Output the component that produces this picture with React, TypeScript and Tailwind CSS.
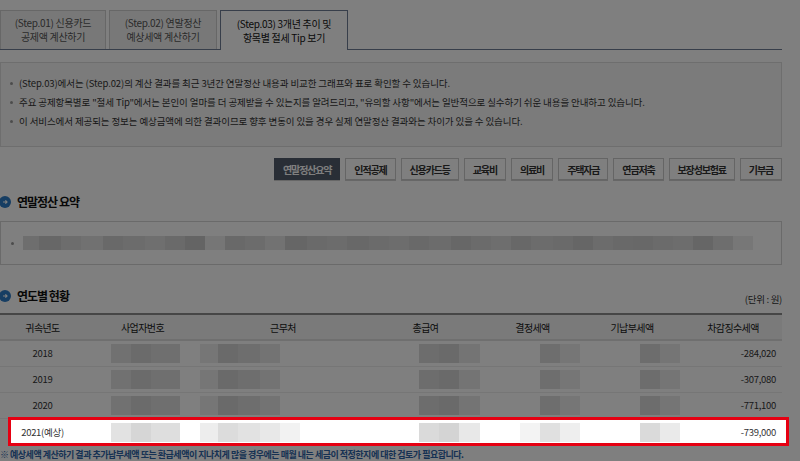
const font = "font-['Noto_Sans_CJK_KR','Noto_Sans',sans-serif]";

const tabs = [
  { lines: ["(Step.01) 신용카드", "공제액 계산하기"], w: "w-[106px]" },
  { lines: ["(Step.02) 연말정산", "예상세액 계산하기"], w: "w-[108px]" },
];

const buttons = ["연말정산요약", "인적공제", "신용카드등", "교육비", "의료비", "주택자금", "연금저축", "보장성보험료", "기부금"];

const notes = [
  "(Step.03)에서는 (Step.02)의 계산 결과를 최근 3년간 연말정산 내용과 비교한 그래프와 표로 확인할 수 있습니다.",
  "주요 공제항목별로 \"절세 Tip\"에서는 본인이 얼마를 더 공제받을 수 있는지를 알려드리고, \"유의할 사항\"에서는 일반적으로 실수하기 쉬운 내용을 안내하고 있습니다.",
  "이 서비스에서 제공되는 정보는 예상금액에 의한 결과이므로 향후 변동이 있을 경우 실제 연말정산 결과와는 차이가 있을 수 있습니다.",
];

const heads = ["귀속년도", "사업자번호", "근무처", "총급여", "결정세액", "기납부세액", "차감징수세액"];

const rows = [
  { year: "2018", amount: "-284,020" },
  { year: "2019", amount: "-307,080" },
  { year: "2020", amount: "-771,100" },
];

// blurred (pixelated) strip: [width, colour class]
type Seg = [number, string];

const summarySegs: Seg[] = [
  [16, "bg-[#dcdcdc]"], [22, "bg-[#cfcfcf]"], [20, "bg-[#dadada]"], [22, "bg-[#e2e2e2]"], [20, "bg-[#d2d2d2]"],
  [22, "bg-[#d8d8d8]"], [20, "bg-[#dfdfdf]"], [20, "bg-[#d4d4d4]"], [20, "bg-[#c9c9c9]"], [20, "bg-[#ececec]"],
  [20, "bg-[#d3d3d3]"], [20, "bg-[#d8d8d8]"], [20, "bg-[#e4e4e4]"], [22, "bg-[#cccccc]"], [20, "bg-[#d4d4d4]"],
  [20, "bg-[#d8d8d8]"], [22, "bg-[#d0d0d0]"], [20, "bg-[#d6d6d6]"], [20, "bg-[#dadada]"], [20, "bg-[#d2d2d2]"],
  [22, "bg-[#d8d8d8]"], [20, "bg-[#cfcfcf]"], [20, "bg-[#d6d6d6]"], [20, "bg-[#dcdcdc]"], [20, "bg-[#d1d1d1]"],
  [22, "bg-[#d8d8d8]"], [20, "bg-[#d4d4d4]"], [20, "bg-[#cdcdcd]"], [20, "bg-[#d9d9d9]"], [20, "bg-[#d3d3d3]"],
  [20, "bg-[#d0d0d0]"], [20, "bg-[#d7d7d7]"], [20, "bg-[#dadada]"], [20, "bg-[#cdcdcd]"], [20, "bg-[#dddddd]"],
  [20, "bg-[#eeeeee]"],
];

function Strip({ segs, className }: { segs: Seg[]; className?: string }) {
  return (
    <div className={"flex " + (className ?? "")}>
      {segs.map(([w, c], i) => (
        <div key={i} className={"h-full shrink-0 " + c} style={{ width: w }} />
      ))}
    </div>
  );
}

const blurA: Seg[] = [[20, "bg-[#e2e2e2]"], [20, "bg-[#d6d6d6]"], [29, "bg-[#dedede]"]];
const blurB: Seg[] = [[18, "bg-[#ececec]"], [20, "bg-[#d4d4d4]"], [22, "bg-[#dcdcdc]"], [20, "bg-[#e6e6e6]"]];
const blurB2: Seg[] = [[18, "bg-[#ededed]"], [20, "bg-[#dcdcdc]"], [22, "bg-[#e2e2e2]"], [20, "bg-[#e8e8e8]"], [20, "bg-[#f2f2f2]"]];
const blurC: Seg[] = [[20, "bg-[#dadada]"], [20, "bg-[#d4d4d4]"], [21, "bg-[#e8e8e8]"]];
const blurD: Seg[] = [[20, "bg-[#dcdcdc]"], [20, "bg-[#ececec]"]];
const blurD2: Seg[] = [[20, "bg-[#f3f3f3]"], [20, "bg-[#e0e0e0]"], [20, "bg-[#eeeeee]"]];
const blurE: Seg[] = [[20, "bg-[#dadada]"], [20, "bg-[#eaeaea]"]];

const grid = "grid grid-cols-[85px_115px_166px_119px_95px_104px_98px]";

function Row({ year, amount, last }: { year: string; amount: string; last?: boolean }) {
  return (
    <div className={grid + " h-[26px] items-center text-[9.5px] text-[#333] tracking-[-0.3px] " + (last ? "" : "border-b border-[#ececec]")}>
      <div className="text-center">{year}</div>
      <div className="h-[19px] pl-[26px]"><Strip segs={blurA} className="h-full" /></div>
      <div className="h-[19px]"><Strip segs={last ? blurB2 : blurB} className="h-full" /></div>
      <div className="h-[19px] pl-[53px]"><Strip segs={blurC} className="h-full" /></div>
      <div className={"h-[19px] " + (last ? "pl-[35px]" : "pl-[55px]")}><Strip segs={last ? blurD2 : blurD} className="h-full" /></div>
      <div className="h-[19px] pl-[60px]"><Strip segs={blurE} className="h-full" /></div>
      <div className="text-right pr-[6px]">{amount}</div>
    </div>
  );
}

function Heading({ title }: { title: string }) {
  return (
    <div className="flex items-center h-[18px] gap-[6px] -ml-px">
      <div className="w-[12px] h-[12px] rounded-full bg-[#2f7cc6] flex items-center justify-center">
        <svg width="6" height="6" viewBox="0 0 6 6">
          <path d="M1 3h4M3.4 1.4 5 3 3.4 4.6" stroke="white" strokeWidth="1.2" fill="none" />
        </svg>
      </div>
      <span className="text-[12px] font-bold text-[#111] tracking-[-1px]">{title}</span>
    </div>
  );
}

export default function App() {
  return (
    <div className={"relative w-[800px] h-[461px] overflow-hidden bg-white " + font}>
      <div className="w-[782px]">
        {/* tabs */}
        <div className="flex items-end h-[50px] gap-[3px] border-b border-[#6e7d95]">
          {tabs.map((t) => (
            <div key={t.lines[0]} className={"h-[39px] border border-b-0 border-[#cfcfcf] bg-[#f1f1f1] flex flex-col items-center justify-center text-[10px] leading-[14px] text-[#555] tracking-[-0.3px] " + t.w}>
              <span>{t.lines[0]}</span>
              <span>{t.lines[1]}</span>
            </div>
          ))}
          <div className="w-[128px] h-[40px] -mb-px border border-b-0 border-[#6e7d95] bg-white flex flex-col items-center justify-center text-[10px] leading-[14px] text-[#111] tracking-[-0.3px]">
            <span>(Step.03) 3개년 추이 및</span>
            <span>항목별 절세 Tip 보기</span>
          </div>
        </div>

        {/* notes */}
        <div className="mt-[12px] border border-[#dcdcdc] bg-[#f6f6f6] pt-[11px] pb-[15px]">
          {notes.map((n) => (
            <div key={n} className="flex items-center h-[19px] text-[9.5px] text-[#333] tracking-[-0.1px]">
              <span className="ml-[9px] mr-[6px] w-[3px] h-[3px] rounded-full bg-[#999]" />
              <span>{n}</span>
            </div>
          ))}
        </div>

        {/* category buttons */}
        <div className="mt-[11px] flex justify-end gap-[5px]">
          {buttons.map((b, i) => (
            <div
              key={b}
              className={
                "h-[22px] px-[8px] flex items-center text-[10px] font-bold tracking-[-1.15px] border shadow-[0_1px_0_#cfcfcf] " +
                (i === 0 ? "bg-[#525c6c] border-[#525c6c] text-white" : "bg-white border-[#cbcbcb] text-[#333]")
              }
            >
              {b}
            </div>
          ))}
        </div>

        {/* summary */}
        <div className="mt-[13px]">
          <Heading title="연말정산 요약" />
        </div>
        <div className="mt-[10px] h-[44px] border border-[#d4d4d4] bg-white flex items-center">
          <span className="ml-[10px] w-[3px] h-[3px] rounded-full bg-[#999]" />
          <Strip segs={summarySegs} className="ml-[9px] h-[14px]" />
        </div>

        {/* yearly */}
        <div className="mt-[22px] flex items-end justify-between">
          <Heading title="연도별 현황" />
          <span className="text-[9.5px] text-[#333] tracking-[-0.3px] leading-[12px]">(단위 : 원)</span>
        </div>
        <div className="mt-[8px] border-t-2 border-[#8c8c8c]">
          <div className={grid + " h-[26px] items-center bg-[#f4f4f4] border-b-2 border-[#dedede] text-[10px] text-[#1a1a1a] tracking-[-0.6px]"}>
            {heads.map((h) => (
              <div key={h} className="text-center">{h}</div>
            ))}
          </div>
          {rows.map((r) => (
            <Row key={r.year} year={r.year} amount={r.amount} />
          ))}
          <div className="relative z-20">
            <div className="absolute left-[8px] -right-[7px] -top-[2px] -bottom-[1px] bg-white border-[3px] border-[#e60012]" />
            <div className="relative">
              <Row year="2021(예상)" amount="-739,000" last />
            </div>
          </div>
        </div>

        <div className="mt-[4px] text-[9px] font-bold text-[#2d63a6] tracking-[-0.5px] leading-[12px] whitespace-nowrap">
          ※ 예상세액 계산하기 결과 추가납부세액 또는 환급세액이 지나치게 많을 경우에는 매월 내는 세금이 적정한지에 대한 검토가 필요합니다.
        </div>
      </div>

      {/* dim overlay */}
      <div className="absolute inset-0 z-10 bg-black/50" />
    </div>
  );
}
